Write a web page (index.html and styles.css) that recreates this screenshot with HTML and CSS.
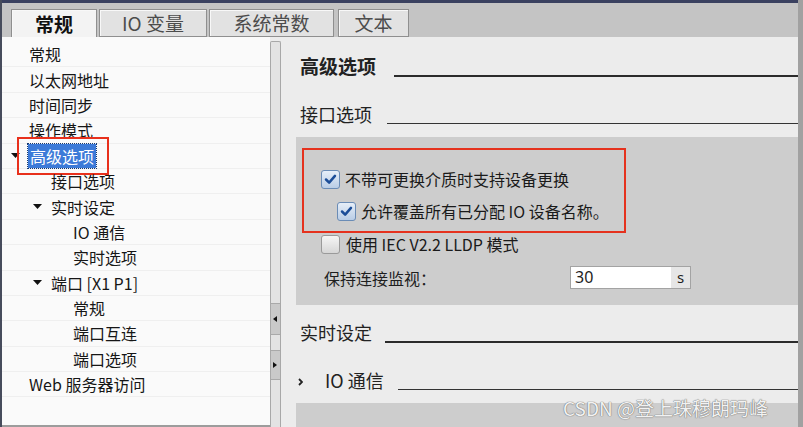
FILE: index.html
```html
<!DOCTYPE html>
<html lang="zh">
<head>
<meta charset="utf-8">
<link rel="stylesheet" href="styles.css">
</head>
<body>
<div class="window">
  <div class="frame">
    <div class="topbar"></div>
    <div class="tabs">
      <div class="tab active t1">常规</div>
      <div class="tab t2">IO 变量</div>
      <div class="tab t3">系统常数</div>
      <div class="tab t4">文本</div>
    </div>
    <div class="content">
      <div class="tree">
        <div class="row l0"><span class="tog"></span><span>常规</span></div>
        <div class="row l0"><span class="tog"></span><span>以太网地址</span></div>
        <div class="row l0"><span class="tog"></span><span>时间同步</span></div>
        <div class="row l0"><span class="tog"></span><span>操作模式</span></div>
        <div class="row l0"><span class="tog"><svg viewBox="0 0 9 5"><polygon points="0,0 9,0 4.5,5" fill="#111"/></svg></span><span class="sel">高级选项</span><div class="annot"></div></div>
        <div class="row l1"><span class="tog"></span><span>接口选项</span></div>
        <div class="row l1"><span class="tog"><svg viewBox="0 0 9 5"><polygon points="0,0 9,0 4.5,5" fill="#111"/></svg></span><span>实时设定</span></div>
        <div class="row l2"><span class="tog"></span><span>IO 通信</span></div>
        <div class="row l2"><span class="tog"></span><span>实时选项</span></div>
        <div class="row l1"><span class="tog"><svg viewBox="0 0 9 5"><polygon points="0,0 9,0 4.5,5" fill="#111"/></svg></span><span>端口 [X1 P1]</span></div>
        <div class="row l2"><span class="tog"></span><span>常规</span></div>
        <div class="row l2"><span class="tog"></span><span>端口互连</span></div>
        <div class="row l2"><span class="tog"></span><span>端口选项</span></div>
        <div class="row l0"><span class="tog"></span><span>Web 服务器访问</span></div>
      </div>
      <div class="splitter">
        <div class="sbar">
          <div class="sbtn sb-left"><svg viewBox="0 0 4 6"><polygon points="4,0 4,6 0,3" fill="#111"/></svg></div>
          <div class="sbtn sb-right"><svg viewBox="0 0 4 6"><polygon points="0,0 0,6 4,3" fill="#111"/></svg></div>
        </div>
      </div>
      <div class="main">
        <div class="head h-title"><span class="htext">高级选项</span><span class="rule"></span></div>
        <div class="head h-sub"><span class="htext">接口选项</span><span class="rule thin"></span></div>
        <div class="optbox">
          <div class="redbox">
            <div class="chk-row">
              <span class="cb checked"><svg viewBox="0 0 19 19"><path d="M4.5 9.5 L8 13 L14.5 5.5" fill="none" stroke="#1b4d98" stroke-width="2.8" stroke-linecap="round" stroke-linejoin="round"/></svg></span>
              <span>不带可更换介质时支持设备更换</span>
            </div>
            <div class="chk-row sub">
              <span class="cb checked"><svg viewBox="0 0 19 19"><path d="M4.5 9.5 L8 13 L14.5 5.5" fill="none" stroke="#1b4d98" stroke-width="2.8" stroke-linecap="round" stroke-linejoin="round"/></svg></span>
              <span>允许覆盖所有已分配 IO 设备名称。</span>
            </div>
          </div>
          <div class="chk-row outer">
            <span class="cb"></span>
            <span class="lbl3">使用 IEC V2.2 LLDP 模式</span>
          </div>
          <div class="field-row">
            <span class="flabel">保持连接监视：</span>
            <div class="input"><span class="ival">30</span><span class="unit">s</span></div>
          </div>
        </div>
        <div class="head h-rt"><span class="htext">实时设定</span><span class="rule"></span></div>
        <div class="head h-io">
          <span class="chev"><svg viewBox="0 0 5 8"><path d="M1 1 L4 4 L1 7" fill="none" stroke="#222" stroke-width="1.8"/></svg></span>
          <span class="htext">IO 通信</span><span class="rule thin"></span>
        </div>
        <div class="bottombox"></div>
      </div>
    </div>
  </div>
  <div class="edge"></div>
  <div class="watermark">CSDN @登上珠穆朗玛峰</div>
</div>
</body>
</html>
```

FILE: styles.css
```css
* { box-sizing: border-box; }

body {
  margin: 0;
  width: 803px;
  height: 427px;
  overflow: hidden;
  font-family: "Noto Sans CJK SC", "Noto Sans", sans-serif;
  color: #1e1e1e;
  background: #c5c5c5;
}

.window {
  position: relative;
  display: flex;
  width: 803px;
  height: 427px;
}

.frame {
  width: 798px;
  display: flex;
  flex-direction: column;
  border-left: 2px solid #474c5c;
}

.edge {
  width: 5px;
  background: #a1a1a1;
}

.topbar {
  height: 3px;
  background: #3a4160;
}

.tabs {
  height: 34px;
  background: #c4c4c4;
  display: flex;
  align-items: flex-end;
  padding-left: 9px;
  gap: 2px;
}

.tab {
  height: 28px;
  display: flex;
  align-items: center;
  justify-content: center;
  font-size: 19px;
  line-height: 24px;
  background: #e2e2e2;
  border: 1px solid #8f8f8f;
  box-shadow: inset 1px 1px 0 #f8f8f8;
  color: #4c4c4c;
}

.tab.active {
  background: #f3f3f3;
  font-weight: bold;
  color: #111;
  border-bottom: none;
}

.t1 { width: 86px; }
.t2 { width: 108px; }
.t3 { width: 125px; }
.t4 { width: 71px; margin-left: 2px; }

.content {
  flex: 1;
  display: flex;
  min-height: 0;
}

.tree {
  width: 268px;
  background: #fafafa;
  padding-top: 5px;
  border-bottom: 2px solid #9c9c9c;
}

.row {
  position: relative;
  height: 25.4px;
  display: flex;
  align-items: center;
  font-size: 16px;
  line-height: 20px;
  border-bottom: 1px solid #efefef;
  color: #161616;
}

.l0 { padding-left: 8px; }
.l1 { padding-left: 30px; }
.l2 { padding-left: 52px; }

.tog {
  width: 19px;
  flex: none;
  display: flex;
  align-items: center;
}

.tog svg {
  width: 9px;
  height: 5px;
  margin-left: 1px;
}

.sel {
  background: #3c7ad8;
  color: #fff;
  outline: 1px dotted #16386f;
  padding: 2px 2px;
  margin-left: -1px;
}

.annot {
  position: absolute;
  left: 15px;
  top: -7px;
  width: 92px;
  height: 38px;
  border: 2px solid #e8301c;
}

.splitter {
  width: 11px;
  background: #ececec;
  padding-top: 4px;
}

.sbar {
  height: 100%;
  border: 1px solid #a8a8a8;
  border-bottom: none;
  background: #e3e3e3;
  border-radius: 2px 2px 0 0;
  display: flex;
  flex-direction: column;
}

.sbtn {
  background: #c9c9c9;
  border-top: 1px solid #a9a9a9;
  border-bottom: 1px solid #a9a9a9;
  display: flex;
  align-items: center;
  justify-content: flex-start;
  padding-left: 2px;
}

.sbtn svg { width: 4px; height: 6px; }

.sb-left { margin-top: 261px; height: 32px; }
.sb-right { margin-top: 15px; height: 30px; }

.main {
  flex: 1;
  background: #ececec;
  padding-left: 15px;
  display: flex;
  flex-direction: column;
}

.head {
  display: flex;
  align-items: flex-start;
  padding-left: 4px;
  height: 24px;
  line-height: 24px;
  font-size: 18px;
  color: #222;
}

.rule {
  flex: 1;
  height: 2px;
  background: #2b2b2b;
  margin-top: 20px;
}

.rule.thin {
  height: 1.5px;
  background: #333;
  margin-top: 20.5px;
}

.h-title { margin-top: 17px; font-size: 19px; font-weight: bold; }
.h-title .rule { margin-left: 18px; margin-top: 21px; }
.h-sub { margin-top: 24px; }
.h-sub .rule { margin-left: 15px; }
.h-rt { margin-top: 15px; }
.h-rt .rule { margin-left: 13px; margin-top: 21px; }
.h-io { margin-top: 24px; padding-left: 2px; }
.h-io .rule { margin-left: 14px; }

.chev {
  width: 27px;
  flex: none;
  display: flex;
  align-items: center;
  height: 24px;
}

.chev svg { width: 5px; height: 8px; margin-top: 3px; }

.optbox {
  margin-top: 11px;
  height: 168px;
  background: #cdcdcd;
  padding: 11px 0 0 6px;
}

.redbox {
  width: 324px;
  height: 85px;
  border: 2px solid #e5321e;
  padding: 20px 0 0 17px;
}

.chk-row {
  display: flex;
  align-items: center;
  height: 19px;
  gap: 5px;
  font-size: 16px;
  line-height: 19px;
  color: #1a1a1a;
}

.chk-row.sub { margin-top: 13px; margin-left: 16px; }
.chk-row.outer { margin-top: 2px; margin-left: 19px; gap: 6px; }

.cb {
  width: 19px;
  height: 19px;
  flex: none;
  border: 1px solid #9a9a9a;
  border-radius: 3px;
  background: linear-gradient(#f6f6f6, #d6d6d6);
  display: flex;
}

.cb.checked {
  border-color: #6a8cb6;
  background: linear-gradient(#e6eef8, #b9cde6);
}

.cb svg { width: 17px; height: 17px; }

.field-row {
  display: flex;
  align-items: center;
  margin-top: 12px;
  margin-left: 22px;
  height: 23px;
  font-size: 16px;
}

.flabel { width: 246px; }

.input {
  width: 121px;
  height: 23px;
  display: flex;
  background: #fff;
  border: 1px solid #a3a3a3;
}

.ival {
  flex: 1;
  padding-left: 4px;
  line-height: 21px;
  font-family: "Noto Sans", sans-serif;
  font-size: 16px;
}

.unit {
  width: 19px;
  background: #e6e6e6;
  text-align: center;
  line-height: 21px;
  font-family: "Noto Sans", sans-serif;
  font-size: 15px;
}

.bottombox {
  flex: 1;
  margin-top: 11px;
  background: #cdcdcd;
}

.watermark {
  position: absolute;
  left: 563px;
  top: 396px;
  font-size: 19px;
  line-height: 24px;
  color: #f2f2f2;
  text-shadow: 0 0 1px #6a6a6a, 0 0 1px #6a6a6a;
  white-space: nowrap;
}
```
